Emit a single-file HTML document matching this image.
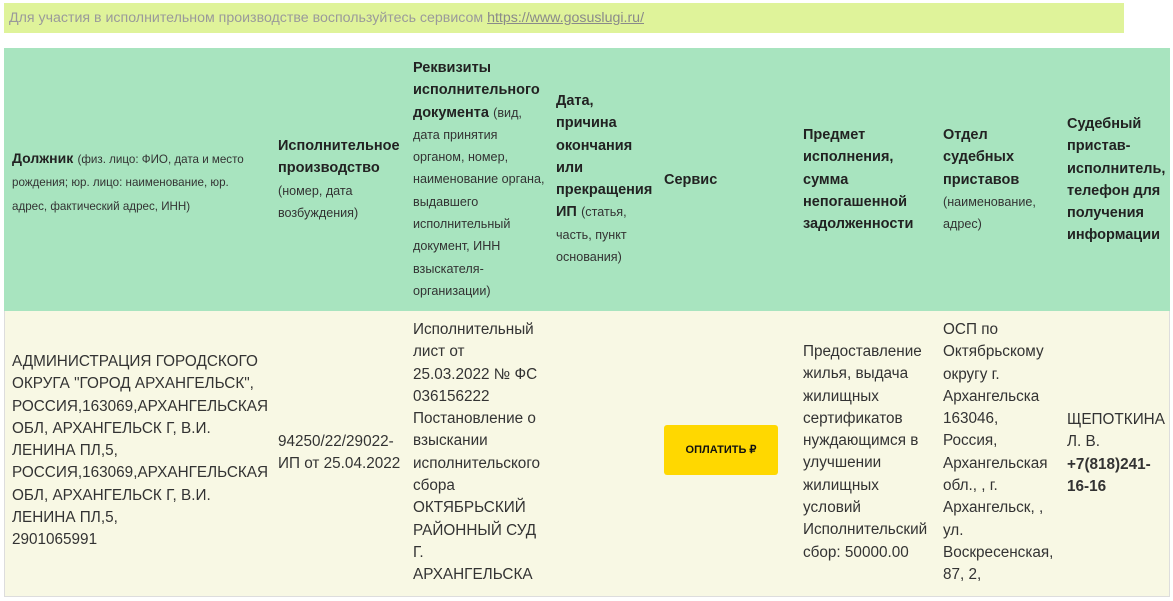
<!DOCTYPE html>
<html><head><meta charset="utf-8"><style>
*{margin:0;padding:0;box-sizing:border-box}
body{width:1173px;height:601px;background:#fff;position:relative;overflow:hidden;font-family:"Liberation Sans",sans-serif;color:#333}
.ban{position:absolute;left:4px;top:3px;width:1120px;height:30px;background:#dff39a;color:#9a9a9a;font-size:14.2px;line-height:30px;padding-left:5px}
.ban u{color:#8a8a8a}
.tbl{position:absolute;left:4px;top:48px;width:1166px;height:549px;border:1px solid #ddd;background:#f8f8e4}
.hd{position:absolute;left:4px;top:48px;width:1166px;height:263px;background:#a8e4bf}
.t{position:absolute;white-space:nowrap;line-height:22.3px;font-size:15.3px}
.h{color:#222}
.h b{font-size:14.5px}
.h s{text-decoration:none;font-size:12.6px;color:#333}
.btn{position:absolute;left:664px;top:425px;width:114px;height:50px;background:#ffd800;border-radius:3px;font-size:11px;font-weight:bold;color:#111;text-align:center;line-height:50px}
</style></head><body>
<div class="ban">Для участия в исполнительном производстве воспользуйтесь сервисом <u>https://www.gosuslugi.ru/</u></div>
<div class="tbl"></div>
<div class="hd"></div>

<div class="t h" style="left:12px;top:147px"><b style="font-size:14px">Должник</b> <s style="font-size:11.6px">(физ. лицо: ФИО, дата и место<br>рождения; юр. лицо: наименование, юр.<br>адрес, фактический адрес, ИНН)</s></div>
<div class="t h" style="left:278px;top:135px"><b>Исполнительное<br>производство</b><br><s>(номер, дата<br>возбуждения)</s></div>
<div class="t h" style="left:413px;top:57px"><b>Реквизиты<br>исполнительного<br>документа</b> <s>(вид,<br>дата принятия<br>органом, номер,<br>наименование органа,<br>выдавшего<br>исполнительный<br>документ, ИНН<br>взыскателя-<br>организации)</s></div>
<div class="t h" style="left:556px;top:90px"><b>Дата,<br>причина<br>окончания<br>или<br>прекращения<br>ИП</b> <s>(статья,<br>часть, пункт<br>основания)</s></div>
<div class="t h" style="left:664px;top:169px"><b>Сервис</b></div>
<div class="t h" style="left:803px;top:124px"><b>Предмет<br>исполнения,<br>сумма<br>непогашенной<br>задолженности</b></div>
<div class="t h" style="left:943px;top:124px"><b>Отдел<br>судебных<br>приставов</b><br><s>(наименование,<br>адрес)</s></div>
<div class="t h" style="left:1067px;top:113px"><b>Судебный<br>пристав-<br>исполнитель,<br>телефон для<br>получения<br>информации</b></div>

<div class="t" style="left:12px;top:351px">АДМИНИСТРАЦИЯ ГОРОДСКОГО<br>ОКРУГА "ГОРОД АРХАНГЕЛЬСК",<br>РОССИЯ,163069,АРХАНГЕЛЬСКАЯ<br>ОБЛ, АРХАНГЕЛЬСК Г, В.И.<br>ЛЕНИНА ПЛ,5,<br>РОССИЯ,163069,АРХАНГЕЛЬСКАЯ<br>ОБЛ, АРХАНГЕЛЬСК Г, В.И.<br>ЛЕНИНА ПЛ,5,<br>2901065991</div>
<div class="t" style="left:278px;top:431px">94250/22/29022-<br>ИП от 25.04.2022</div>
<div class="t" style="left:413px;top:319px">Исполнительный<br>лист от<br>25.03.2022 № ФС<br>036156222<br>Постановление о<br>взыскании<br>исполнительского<br>сбора<br>ОКТЯБРЬСКИЙ<br>РАЙОННЫЙ СУД<br>Г.<br>АРХАНГЕЛЬСКА</div>
<div class="btn">ОПЛАТИТЬ ₽</div>
<div class="t" style="left:803px;top:341px">Предоставление<br>жилья, выдача<br>жилищных<br>сертификатов<br>нуждающимся в<br>улучшении<br>жилищных<br>условий<br>Исполнительский<br>сбор: 50000.00</div>
<div class="t" style="left:943px;top:319px">ОСП по<br>Октябрьскому<br>округу г.<br>Архангельска<br>163046,<br>Россия,<br>Архангельская<br>обл., , г.<br>Архангельск, ,<br>ул.<br>Воскресенская,<br>87, 2,</div>
<div class="t" style="left:1067px;top:409px">ЩЕПОТКИНА<br>Л. В.<br><b>+7(818)241-<br>16-16</b></div>
</body></html>
